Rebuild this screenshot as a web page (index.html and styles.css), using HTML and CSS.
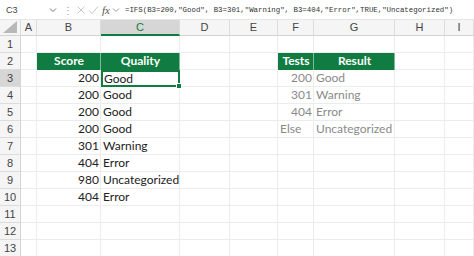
FILE: index.html
```html
<!DOCTYPE html>
<html lang="en">
<head>
    <meta charset="UTF-8">
    <title>IFS example</title>
    <link rel="stylesheet" href="styles.css">
</head>
<body>
    <div class="formula-bar">
        <div class="name-box">C3</div>
        <svg class="chev" width="8" height="6" viewBox="0 0 8 6"><path d="M1 1.5 L4 4.5 L7 1.5" fill="none" stroke="#777" stroke-width="1"/></svg>
        <span class="dots">⋮</span>
        <svg class="fx-icon" width="10" height="10" viewBox="0 0 10 10"><path d="M1.5 1.5 L8.5 8.5 M8.5 1.5 L1.5 8.5" stroke="#c8c8c8" stroke-width="1"/></svg>
        <svg class="fx-icon" width="11" height="10" viewBox="0 0 11 10"><path d="M1 5.5 L4 8.5 L10 1.5" fill="none" stroke="#c8c8c8" stroke-width="1"/></svg>
        <span class="fx">fx</span>
        <svg class="chev" width="8" height="6" viewBox="0 0 8 6"><path d="M1 1.5 L4 4.5 L7 1.5" fill="none" stroke="#999" stroke-width="1"/></svg>
        <div class="formula">=IFS(B3=200,"Good", B3=301,"Warning", B3=404,"Error",TRUE,"Uncategorized")</div>
    </div>

    <div class="sheet">
        <div class="corner"><svg width="14" height="12" viewBox="0 0 14 12"><path d="M14 0 L14 12 L0 12 Z" fill="#b8b8b8"/></svg></div>
        <div class="col-head">A</div>
        <div class="col-head">B</div>
        <div class="col-head active">C</div>
        <div class="col-head">D</div>
        <div class="col-head">E</div>
        <div class="col-head">F</div>
        <div class="col-head">G</div>
        <div class="col-head">H</div>
        <div class="col-head">I</div>
    </div>
    <div class="sheet" id="rows"></div>

    <script>
        // cell contents per row: [B, C, F, G]
        const data = {
            2: ['Score', 'Quality', 'Tests', 'Result'],
            3: ['200', 'Good', '200', 'Good'],
            4: ['200', 'Good', '301', 'Warning'],
            5: ['200', 'Good', '404', 'Error'],
            6: ['200', 'Good', 'Else', 'Uncategorized'],
            7: ['301', 'Warning'],
            8: ['404', 'Error'],
            9: ['980', 'Uncategorized'],
            10: ['404', 'Error']
        };

        const rows = document.getElementById('rows');
        for (let r = 1; r <= 13; r++) {
            const d = data[r] || [];
            const head = r === 2;
            const cells = [
                ['row-head' + (r === 3 ? ' active' : ''), r],
                ['cell', ''],
                ['cell num' + (head ? ' head' : ''), d[0] || ''],
                ['cell' + (head ? ' head' : '') + (r === 3 ? ' selected' : ''), d[1] || ''],
                ['cell', ''],
                ['cell', ''],
                ['cell num soft' + (head ? ' head' : '') + (d[2] === 'Else' ? ' left' : ''), d[2] || ''],
                ['cell soft' + (head ? ' head' : ''), d[3] || ''],
                ['cell', ''],
                ['cell', '']
            ];
            cells.forEach(function(c) {
                const el = document.createElement('div');
                el.className = c[0];
                el.textContent = c[1];
                rows.appendChild(el);
            });
        }
    </script>
</body>
</html>
```

FILE: styles.css
```css
body {
    margin: 0;
    width: 474px;
    height: 256px;
    overflow: hidden;
    background: #fff;
    font-family: Lato, "Noto Sans", sans-serif;
}

/* formula bar */
.formula-bar {
    height: 19px;
    display: flex;
    align-items: center;
    border-bottom: 1px solid #e6e6e6;
    color: #444;
}

.name-box {
    width: 41px;
    padding-left: 6px;
    font-size: 9px;
    font-family: "Liberation Sans", sans-serif;
}

.chev {
    margin: 0 4px 0 2px;
}

.dots {
    font-size: 10px;
    color: #999;
    margin: 0 3px 0 2px;
}

.fx-icon {
    margin-right: 2px;
}

.fx {
    font-family: "Liberation Serif", serif;
    font-style: italic;
    font-size: 11px;
    margin-left: 1px;
    color: #555;
}

.formula {
    margin-left: 1px;
    font-family: "Liberation Mono", monospace;
    font-size: 7.4px;
    color: #333;
    white-space: nowrap;
}

/* grid */
.sheet {
    display: grid;
    grid-template-columns: 21px 16px 64px 79px 50px 48px 36px 81px 50px 29px;
}

#rows {
    grid-auto-rows: 17px;
}

.corner,
.col-head {
    height: 16px;
    background: #f5f5f5;
    border-right: 1px solid #dcdcdc;
    border-bottom: 1px solid #d4d4d4;
    box-sizing: border-box;
}

.corner {
    display: flex;
    align-items: flex-end;
    justify-content: flex-end;
    padding: 0 3px 2px 0;
}

.col-head {
    font-size: 11px;
    color: #444;
    text-align: center;
    line-height: 15px;
    font-family: "Liberation Sans", sans-serif;
}

.col-head.active {
    background: #d6d6d6;
    border-bottom: 2px solid #107c41;
    color: #107c41;
}

.row-head {
    background: #f5f5f5;
    border-right: 1px solid #d4d4d4;
    border-bottom: 1px solid #dcdcdc;
    box-sizing: border-box;
    font-size: 11px;
    color: #444;
    text-align: center;
    line-height: 16px;
    font-family: "Liberation Sans", sans-serif;
}

.row-head.active {
    background: #d6d6d6;
}

.cell {
    border-right: 1px solid #ececec;
    border-bottom: 1px solid #ececec;
    box-sizing: border-box;
    font-size: 12px;
    line-height: 16px;
    color: #222;
    padding: 0 1px 0 2px;
    white-space: nowrap;
    overflow: visible;
}

.cell.num {
    text-align: right;
}

.cell.left {
    text-align: left;
}

.cell.soft {
    color: #8a8a8a;
}

.cell.head {
    background: #107c41;
    color: #fff;
    font-weight: bold;
    text-align: center;
    border-right: 1px solid #7fb89a;
    border-bottom: none;
}

.cell.selected {
    border: 2px solid #107c41;
    position: relative;
    line-height: 13px;
    padding-left: 1px;
}

.cell.selected::after {
    content: "";
    position: absolute;
    right: -4px;
    bottom: -4px;
    width: 4px;
    height: 4px;
    background: #107c41;
    border: 1px solid #fff;
}
```
